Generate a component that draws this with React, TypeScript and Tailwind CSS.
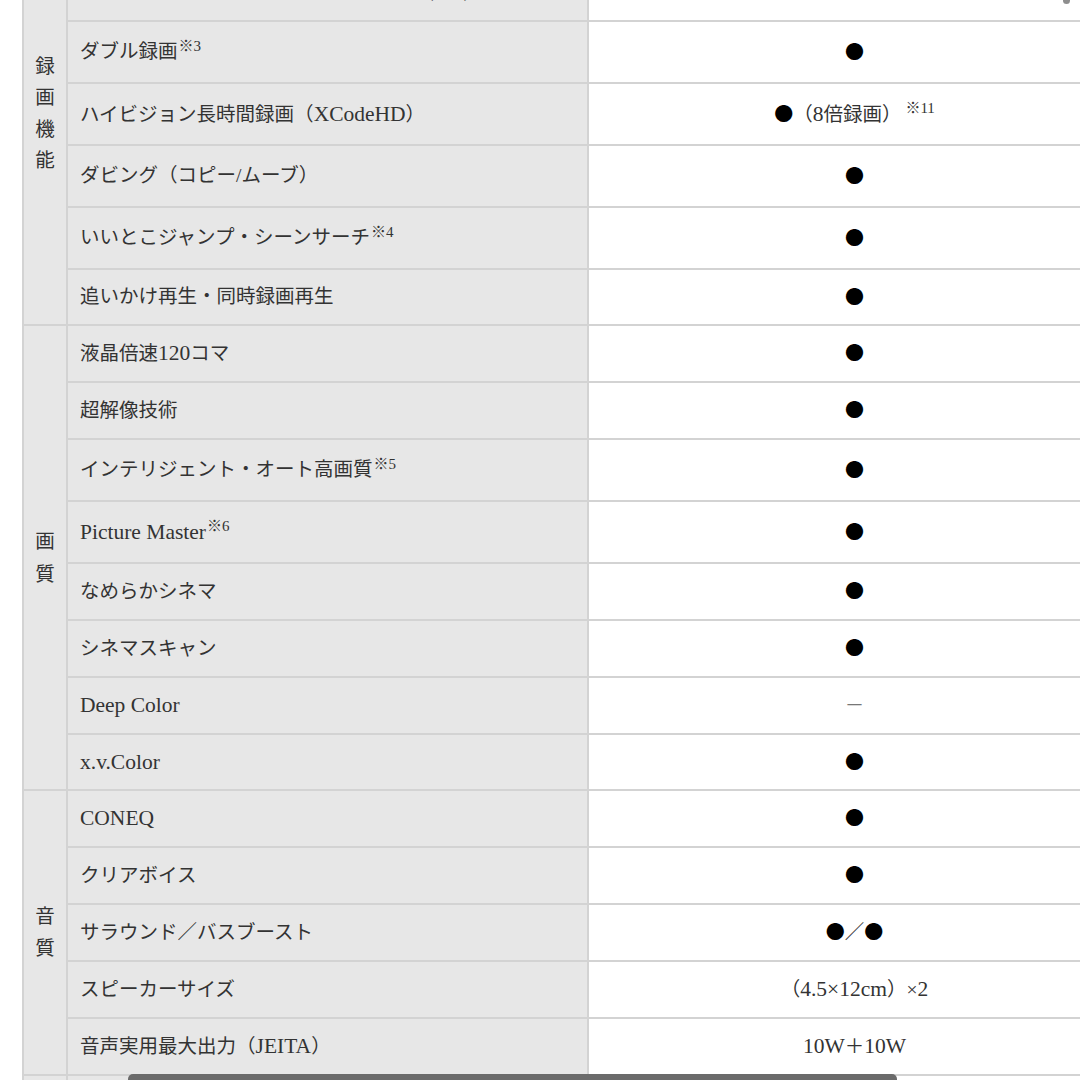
import React from "react";

type Row = { h: number; f: string; fsup?: string; v: string; vsup?: string };
type Group = { cat: string; lead: string; rows: Row[] };

const groups: Group[] = [
  {
    cat: "録画機能",
    lead: "leading-[31.5px]",
    rows: [
      { h: 57, f: "USBハードディスク録画", v: "対応" },
      { h: 62, f: "USB HDD録画（タイムシフト「録画」(※2)", v: "対応" },
      { h: 62, f: "ダブル録画", fsup: "※3", v: "●" },
      { h: 62, f: "ハイビジョン長時間録画（XCodeHD）", v: "●（8倍録画）", vsup: "※11" },
      { h: 62, f: "ダビング（コピー/ムーブ）", v: "●" },
      { h: 62, f: "いいとこジャンプ・シーンサーチ", fsup: "※4", v: "●" },
      { h: 56, f: "追いかけ再生・同時録画再生", v: "●" },
    ],
  },
  {
    cat: "画質",
    lead: "leading-[33px]",
    rows: [
      { h: 57, f: "液晶倍速120コマ", v: "●" },
      { h: 57, f: "超解像技術", v: "●" },
      { h: 62, f: "インテリジェント・オート高画質", fsup: "※5", v: "●" },
      { h: 62, f: "Picture Master", fsup: "※6", v: "●" },
      { h: 57, f: "なめらかシネマ", v: "●" },
      { h: 57, f: "シネマスキャン", v: "●" },
      { h: 57, f: "Deep Color", v: "－" },
      { h: 56, f: "x.v.Color", v: "●" },
    ],
  },
  {
    cat: "音質",
    lead: "leading-[32px]",
    rows: [
      { h: 57, f: "CONEQ", v: "●" },
      { h: 57, f: "クリアボイス", v: "●" },
      { h: 57, f: "サラウンド／バスブースト", v: "●／●" },
      { h: 57, f: "スピーカーサイズ", v: "（4.5×12cm）×2" },
      { h: 57, f: "音声実用最大出力（JEITA）", v: "10W＋10W" },
    ],
  },
  {
    cat: "端子",
    lead: "leading-[32px]",
    rows: [
      { h: 57, f: "HDMI入力端子", v: "2系統" },
      { h: 57, f: "USB端子", v: "1系統" },
    ],
  },
];

function Mixed({ text }: { text: string }) {
  const parts = text.split(/([A-Za-z0-9][A-Za-z0-9 .\/×+\-]*)/g);
  return (
    <>
      {parts.map((p, i) => {
        if (p === "") return null;
        if (i % 2 === 1) {
          return (
            <span key={i} className="text-[21.5px]">
              {p}
            </span>
          );
        }
        const bits = p.split(/(●|－)/g);
        return (
          <React.Fragment key={i}>
            {bits.map((b, j) =>
              b === "●" ? (
                <span key={j} className="font-['Noto_Sans_CJK_JP',sans-serif] text-[19px] text-black">
                  ●
                </span>
              ) : b === "－" ? (
                <span key={j} className="text-[#777]">
                  －
                </span>
              ) : (
                <span key={j}>{b}</span>
              )
            )}
          </React.Fragment>
        );
      })}
    </>
  );
}

export default function App() {
  return (
    <div className="relative w-[1080px] h-[1080px] overflow-hidden bg-white font-['Liberation_Serif','Noto_Sans_CJK_JP',serif] text-[19.5px] text-[#333]">
      <div className="ml-[22px] mt-[-99px] w-[1100px] border-l-2 border-t-2 border-r-2 border-[#d3d3d3]">
        {groups.map((g) => (
          <div key={g.cat} className="flex">
            <div className="w-[44px] shrink-0 bg-[#e7e7e7] border-r-2 border-b-2 border-[#d3d3d3] flex flex-col items-center justify-center">
              {Array.from(g.cat).map((c, i) => (
                <span key={i} className={`block ${g.lead}`}>
                  {c}
                </span>
              ))}
            </div>
            <div className="flex-1 flex flex-col">
              {g.rows.map((r, i) => (
                <div key={i} className="flex border-b-2 border-[#d3d3d3]" style={{ height: r.h }}>
                  <div className="w-[521px] shrink-0 bg-[#e7e7e7] border-r-2 border-[#d3d3d3] pl-3 flex items-center whitespace-nowrap">
                    <span>
                      <Mixed text={r.f} />
                      {r.fsup && <sup className="text-[15px] ml-[1px]">{r.fsup}</sup>}
                    </span>
                  </div>
                  <div className="flex-1 flex items-center justify-center whitespace-nowrap">
                    <span>
                      <Mixed text={r.v} />
                      {r.vsup && <sup className="text-[15px] ml-[4px]">{r.vsup}</sup>}
                    </span>
                  </div>
                </div>
              ))}
            </div>
          </div>
        ))}
      </div>
      <div className="absolute right-[10px] top-[-40px] w-[7px] h-[44px] rounded-full bg-[#8e8e8e]" />
      <div className="absolute left-[128px] top-[1074px] w-[769px] h-[10px] rounded-full bg-[#6b6b6b]" />
    </div>
  );
}
